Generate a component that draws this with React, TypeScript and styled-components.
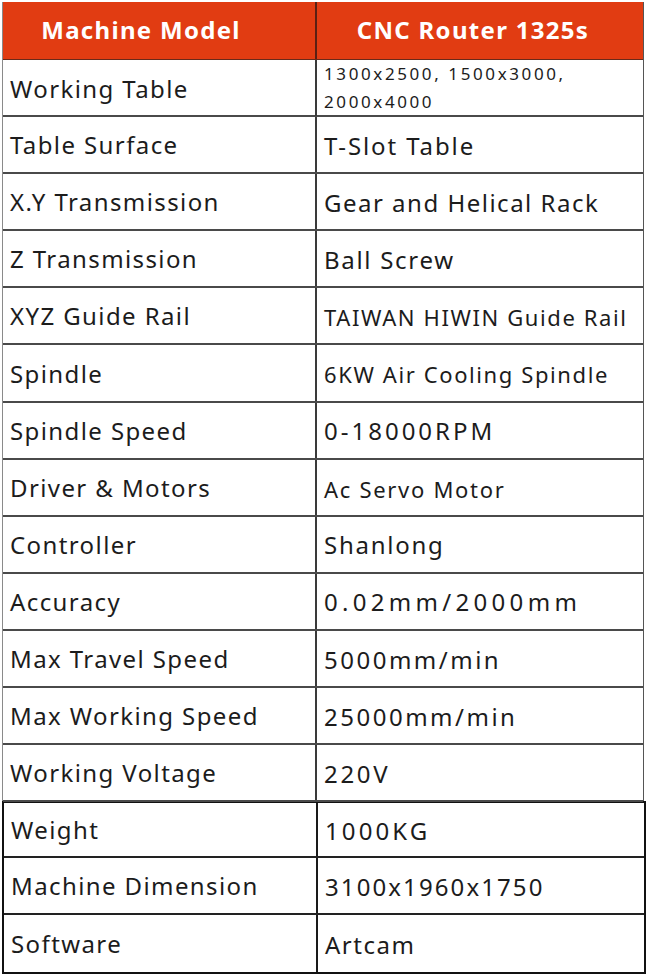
import React from "react";
import styled, { createGlobalStyle } from "styled-components";

interface Spec {
  label: string;
  value: string[];
  size?: number;
  track?: number;
}

const mainSpecs: Spec[] = [
  { label: "Working Table", value: ["1300x2500, 1500x3000,", "2000x4000"], size: 17, track: 2.6 },
  { label: "Table Surface", value: ["T-Slot Table"], track: 1.9 },
  { label: "X.Y Transmission", value: ["Gear and Helical Rack"], track: 1.5 },
  { label: "Z Transmission", value: ["Ball Screw"], track: 1.7 },
  { label: "XYZ Guide Rail", value: ["TAIWAN HIWIN Guide Rail"], size: 22, track: 1.6 },
  { label: "Spindle", value: ["6KW Air Cooling Spindle"], size: 22, track: 1.6 },
  { label: "Spindle Speed", value: ["0-18000RPM"], track: 3 },
  { label: "Driver & Motors", value: ["Ac Servo Motor"], size: 22, track: 1.7 },
  { label: "Controller", value: ["Shanlong"], track: 1.75 },
  { label: "Accuracy", value: ["0.02mm/2000mm"], track: 4.3 },
  { label: "Max Travel Speed", value: ["5000mm/min"], track: 2.5 },
  { label: "Max Working Speed", value: ["25000mm/min"], track: 2.5 },
  { label: "Working Voltage", value: ["220V"], track: 2.7 },
];

const extraSpecs: Spec[] = [
  { label: "Weight", value: ["1000KG"], track: 3.1 },
  { label: "Machine Dimension", value: ["3100x1960x1750"], track: 2.1 },
  { label: "Software", value: ["Artcam"], track: 1.5 },
];

const GlobalStyle = createGlobalStyle`
  body {
    margin: 0;
    background: #ffffff;
    font-family: "Noto Sans", "Open Sans", sans-serif;
    color: #1c1c1c;
  }
`;

const Sheet = styled.div`
  width: 648px;
  padding: 2px 2px 0 2px;
  box-sizing: border-box;
`;

const SpecTable = styled.div<{ $boxed?: boolean }>`
  display: flex;
  flex-direction: column;
  box-sizing: border-box;
  width: ${(p) => (p.$boxed ? "644px" : "642px")};
  border-left: ${(p) => (p.$boxed ? "2px solid #111" : "1px solid #8a8a8a")};
  border-right: ${(p) => (p.$boxed ? "2px solid #111" : "1px solid #555")};
  border-top: ${(p) => (p.$boxed ? "2px solid #111" : "none")};
  border-bottom: ${(p) => (p.$boxed ? "2px solid #111" : "none")};
  margin-top: ${(p) => (p.$boxed ? "-1px" : "0")};
`;

const HeaderRow = styled.div`
  display: grid;
  grid-template-columns: 314px 1fr;
  height: 58px;
  background: #e13c12;
  border-bottom: 1px solid #6a2a1a;
  box-sizing: border-box;
`;

const HeaderCell = styled.div<{ $divider?: boolean }>`
  display: flex;
  align-items: center;
  justify-content: center;
  color: #ffffff;
  font-weight: 700;
  font-size: 24px;
  letter-spacing: 1.3px;
  padding-bottom: 2px;
  border-right: ${(p) => (p.$divider ? "2px solid #5a2014" : "none")};
  padding-right: ${(p) => (p.$divider ? "36px" : "14px")};
`;

const Row = styled.div<{ $height: number; $dark?: boolean; $last?: boolean }>`
  display: grid;
  grid-template-columns: 314px 1fr;
  height: ${(p) => p.$height}px;
  box-sizing: border-box;
  border-bottom: ${(p) =>
    p.$last ? "none" : p.$dark ? "2px solid #222" : "2px solid #4a4a4a"};
`;

const LabelCell = styled.div<{ $dark?: boolean }>`
  display: flex;
  align-items: center;
  padding-left: 7px;
  font-size: 24px;
  letter-spacing: 1.4px;
  white-space: nowrap;
  border-right: 2px solid ${(p) => (p.$dark ? "#1a1a1a" : "#3a3a3a")};
`;

const ValueCell = styled.div<{ $size: number; $track: number; $multi?: boolean }>`
  display: flex;
  flex-direction: column;
  justify-content: center;
  padding-left: 7px;
  white-space: nowrap;
  font-size: ${(p) => p.$size}px;
  letter-spacing: ${(p) => p.$track}px;
  line-height: ${(p) => (p.$multi ? "28px" : "1.2")};
  padding-top: ${(p) => (p.$multi ? "0" : "3px")};
`;

const SpecRow: React.FC<{ spec: Spec; height: number; dark?: boolean; last?: boolean }> = ({
  spec,
  height,
  dark,
  last,
}) => (
  <Row $height={height} $dark={dark} $last={last}>
    <LabelCell $dark={dark}>{spec.label}</LabelCell>
    <ValueCell
      $size={spec.size ?? 24}
      $track={spec.track ?? 1.5}
      $multi={spec.value.length > 1}
    >
      {spec.value.map((line) => (
        <span key={line}>{line}</span>
      ))}
    </ValueCell>
  </Row>
);

export default function App() {
  return (
    <>
      <GlobalStyle />
      <Sheet>
        <SpecTable>
          <HeaderRow>
            <HeaderCell $divider>Machine Model</HeaderCell>
            <HeaderCell>CNC Router 1325s</HeaderCell>
          </HeaderRow>
          {mainSpecs.map((s) => (
            <SpecRow key={s.label} spec={s} height={57.1} />
          ))}
        </SpecTable>
        <SpecTable $boxed>
          {extraSpecs.map((s, i) => (
            <SpecRow
              key={s.label}
              spec={s}
              height={i === 0 ? 55 : 57}
              dark
              last={i === extraSpecs.length - 1}
            />
          ))}
        </SpecTable>
      </Sheet>
    </>
  );
}
